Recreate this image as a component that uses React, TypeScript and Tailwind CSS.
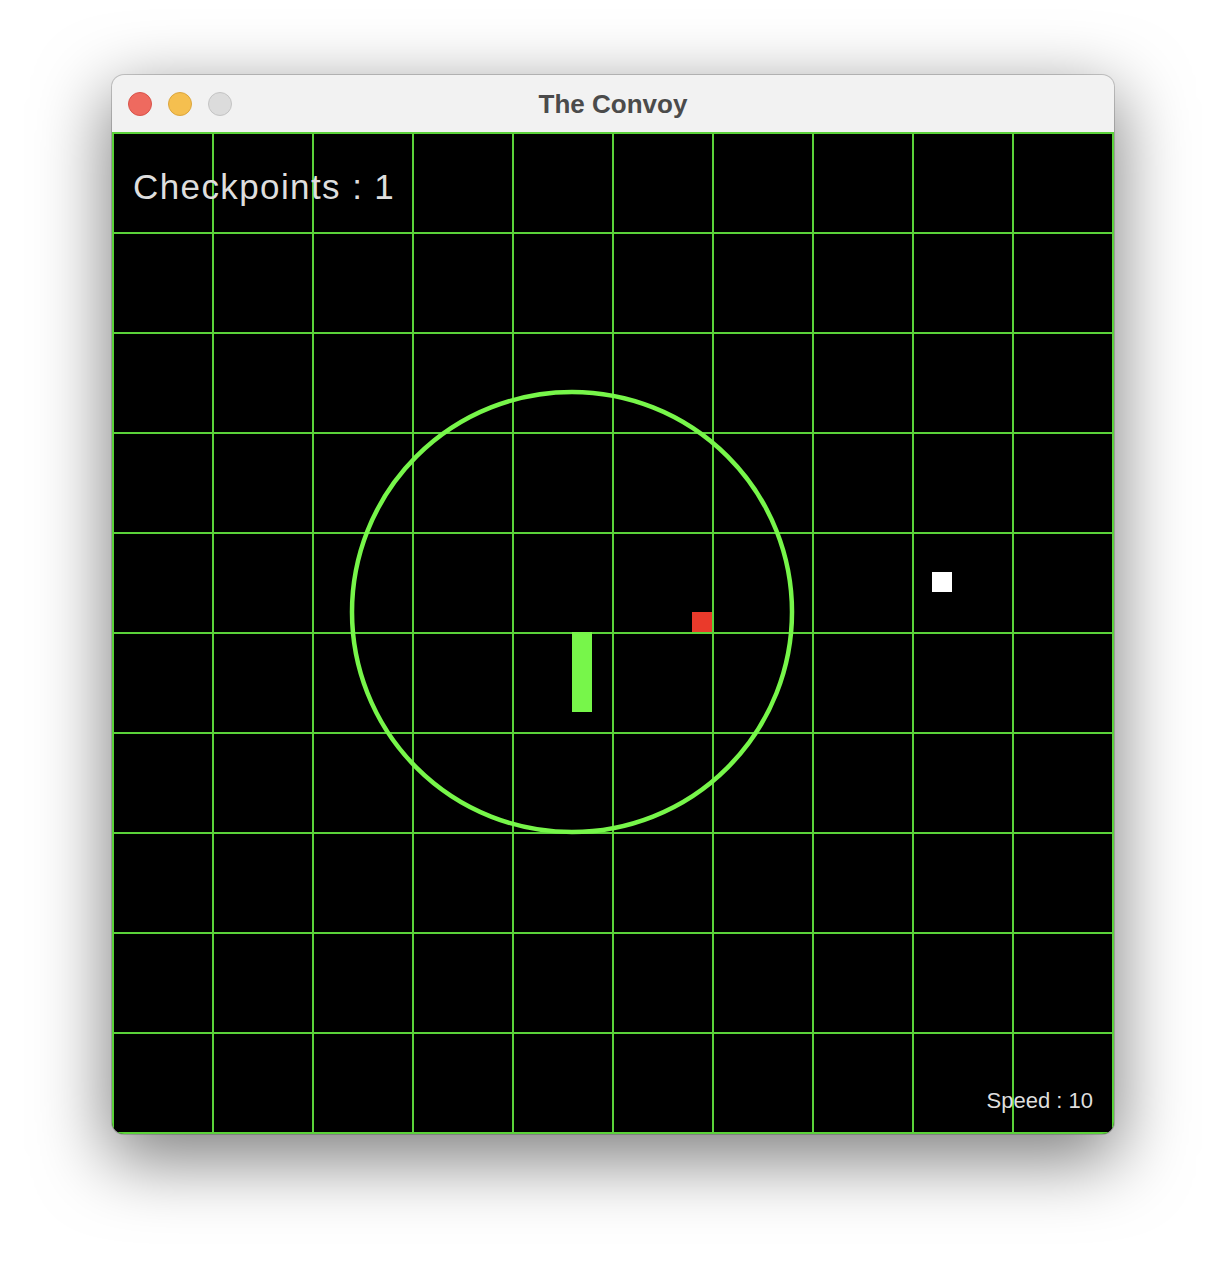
import React from "react";

const CANVAS = 1002;
const lines = Array.from({ length: 11 }, (_, i) => i * 100);

export default function App() {
  return (
    <div className="min-h-[1282px] w-[1226px] bg-white pt-[75px] pl-[112px]">
      <div className="w-[1002px] overflow-hidden rounded-[12px] bg-[#f2f2f2] shadow-[0_22px_70px_4px_rgba(0,0,0,0.5),0_0_0_1px_rgba(0,0,0,0.18)]">
        {/* title bar */}
        <div className="relative flex h-[57px] items-center justify-center">
          <div className="absolute left-[16px] top-[17px] flex gap-[16px]">
            <span className="h-[24px] w-[24px] rounded-full border border-[#d9534a] bg-[#ee6a5f]" />
            <span className="h-[24px] w-[24px] rounded-full border border-[#dca63d] bg-[#f5bf4f]" />
            <span className="h-[24px] w-[24px] rounded-full border border-[#c4c4c4] bg-[#dcdcdc]" />
          </div>
          <span className="font-['Liberation_Sans',Arial,sans-serif] text-[26px] font-bold leading-none text-[#4b4b4b]">
            The Convoy
          </span>
        </div>

        {/* game canvas */}
        <div className="relative h-[1002px] w-[1002px] bg-black">
          <svg width={CANVAS} height={CANVAS} className="block">
            {lines.map((p) => (
              <rect key={"v" + p} x={p} y={0} width={2} height={CANVAS} fill="#5bd23a" />
            ))}
            {lines.map((p) => (
              <rect key={"h" + p} x={0} y={p} width={CANVAS} height={2} fill="#5bd23a" />
            ))}
            <circle cx={460} cy={480} r={220} fill="none" stroke="#77f64a" strokeWidth={4.5} />
            <rect x={460} y={500} width={20} height={80} fill="#77f64a" />
            <rect x={580} y={480} width={20} height={20} fill="#ea3a2b" />
            <rect x={820} y={440} width={20} height={20} fill="#ffffff" />
          </svg>
          <div className="absolute left-[21px] top-[37px] font-['Liberation_Sans',Arial,sans-serif] text-[35px] leading-none tracking-[1.4px] text-[#dedede]">
            Checkpoints : 1
          </div>
          <div className="absolute right-[21px] top-[958px] font-['Liberation_Sans',Arial,sans-serif] text-[22px] leading-none text-[#dedede]">
            Speed : 10
          </div>
        </div>
      </div>
    </div>
  );
}
